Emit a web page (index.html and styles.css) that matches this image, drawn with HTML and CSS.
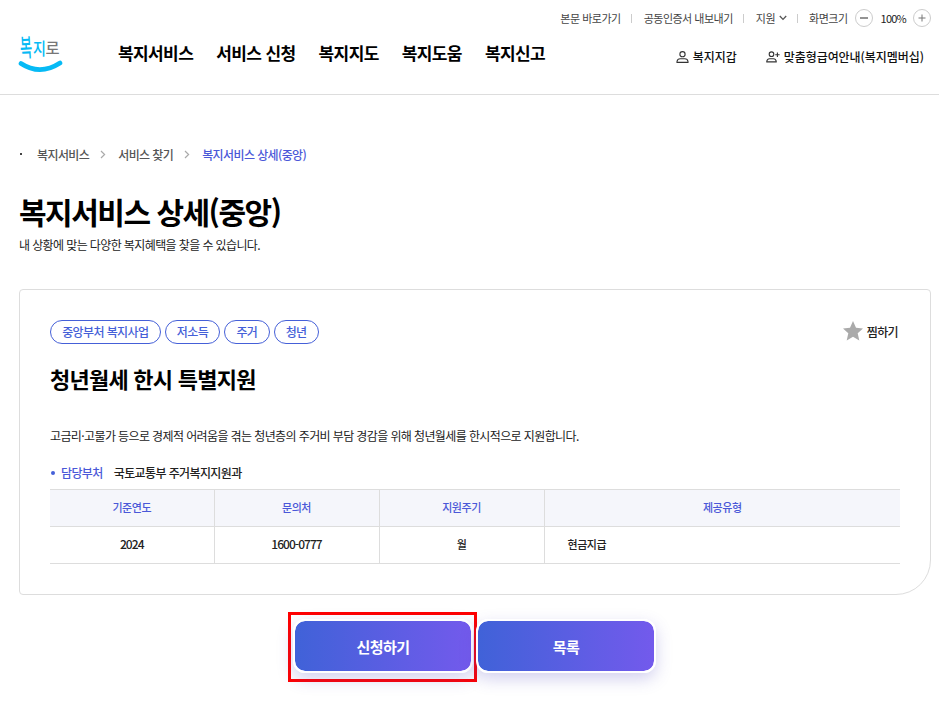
FILE: index.html
```
<!DOCTYPE html>
<html lang="ko">

<head>
    <meta charset="UTF-8">
    <meta name="viewport" content="width=device-width, initial-scale=1.0">
    <title>복지서비스 상세(중앙)</title>
    <link rel="stylesheet" href="styles.css">
</head>

<body>
    <header class="header">
        <a class="logo" href="#">
            <svg width="46" height="46" viewBox="0 -6 46 46">
                <g class="logo-text">
                    <text class="blue" transform="translate(2.500 23) rotate(-3) scale(.66 1.250)" font-size="20">복</text>
                    <text class="blue" transform="translate(15 20.500) scale(.78 .95)" font-size="18">지</text>
                    <text class="gray" transform="translate(27.500 20) scale(.9 .95)" font-size="17">로</text>
                </g>
                <path d="M3 29.5Q22 42 42 29" fill="none" stroke="#06baf5" stroke-width="4.600" stroke-linecap="round"/>
            </svg>
        </a>
        <nav class="gnb">
            <a href="#">복지서비스</a>
            <a href="#">서비스 신청</a>
            <a href="#">복지지도</a>
            <a href="#">복지도움</a>
            <a href="#">복지신고</a>
        </nav>
        <div class="right">
            <div class="util">
                <a href="#">본문 바로가기</a>
                <i class="bar"></i>
                <a href="#">공동인증서 내보내기</a>
                <i class="bar"></i>
                <a href="#">지원</a>
                <svg class="down" width="8" height="6" viewBox="0 0 8 6"><path d="M.8 1L4 4.4 7.2 1" fill="none" stroke="#555" stroke-width="1.3"/></svg>
                <i class="bar last"></i>
                <span>화면크기</span>
                <button class="zoom minus"><svg width="8" height="8" viewBox="0 0 8 8"><path d="M0 4h8" stroke="#666" stroke-width="1.4"/></svg></button>
                <span class="percent">100%</span>
                <button class="zoom"><svg width="8" height="8" viewBox="0 0 8 8"><path d="M.5 4h7M4 .5v7" stroke="#777" stroke-width="1"/></svg></button>
            </div>
            <div class="member">
                <a href="#">
                    <svg width="13" height="13" viewBox="0 0 13 13" fill="none" stroke="#333" stroke-width="1.1"><circle cx="6.5" cy="3.2" r="2.6"/><path d="M1 11.400V10.500Q1.500 7.700 4.200 7.700H8.800Q11.500 7.700 12 10.500V11.400Z"/></svg>
                    복지지갑
                </a>
                <a href="#">
                    <svg width="14" height="13" viewBox="0 0 14 13" fill="none" stroke="#333" stroke-width="1.1"><circle cx="5.500" cy="3.200" r="2.300"/><path d="M.8 10.900V10.200Q1.300 7.700 3.500 7.700H7.500Q9.700 7.700 10.200 10.200V10.900ZM9.200 3.700H13.600M11.400 1.500V5.900"/></svg>
                    맞춤형급여안내(복지멤버십)
                </a>
            </div>
        </div>
    </header>

    <main class="container">
        <div class="location">
            <i class="home"></i>
            <a href="#">복지서비스</a>
            <svg width="6" height="9" viewBox="0 0 6 9"><path d="M1 1l3.600 3.500L1 8" fill="none" stroke="#aaa" stroke-width="1.2"/></svg>
            <a href="#">서비스 찾기</a>
            <svg width="6" height="9" viewBox="0 0 6 9"><path d="M1 1l3.600 3.500L1 8" fill="none" stroke="#aaa" stroke-width="1.2"/></svg>
            <a class="on" href="#">복지서비스 상세(중앙)</a>
        </div>

        <h1>복지서비스 상세(중앙)</h1>
        <p class="sub">내 상황에 맞는 다양한 복지혜택을 찾을 수 있습니다.</p>

        <section class="card">
            <div class="card-top">
                <div class="tags">
                    <span>중앙부처 복지사업</span>
                    <span>저소득</span>
                    <span>주거</span>
                    <span>청년</span>
                </div>
                <button class="zzim">
                    <svg width="20" height="20" viewBox="0 0 20 20"><path d="M10 0l3 6.700 7 .7-5.300 4.800 1.600 7.300L10 15.700l-6.300 3.800 1.600-7.300L0 7.400l7-.7z" fill="#aaa"/></svg>
                    찜하기
                </button>
            </div>
            <h2>청년월세 한시 특별지원</h2>
            <p class="desc">고금리·고물가 등으로 경제적 어려움을 겪는 청년층의 주거비 부담 경감을 위해 청년월세를 한시적으로 지원합니다.</p>
            <div class="dept"><b>담당부처</b><span>국토교통부 주거복지지원과</span></div>
            <table>
                <tr>
                    <th class="first">기준연도</th>
                    <th>문의처</th>
                    <th>지원주기</th>
                    <th class="wide">제공유형</th>
                </tr>
                <tr>
                    <td class="num">2024</td>
                    <td class="num">1600-0777</td>
                    <td>월</td>
                    <td class="left">현금지급</td>
                </tr>
            </table>
        </section>

        <div class="btns">
            <div class="marked"><button class="btn">신청하기</button></div>
            <button class="btn">목록</button>
        </div>
    </main>
</body>

</html>
```
FILE: styles.css
```
* {
    box-sizing: border-box;
    margin: 0;
    padding: 0;
}

body {
    height: 707px;
    overflow: hidden;
    background: #fff;
    color: #222;
    font-family: "Noto Sans CJK KR", "Noto Sans", sans-serif;
    font-size: 12px;
    font-weight: 400;
    letter-spacing: -0.61px;
    white-space: nowrap;
}

a {
    color: inherit;
    text-decoration: none;
}

button {
    font: inherit;
    letter-spacing: inherit;
    color: inherit;
    background: none;
    border: 0;
}

svg {
    flex: none;
    display: block;
}

/* header */
.header {
    display: flex;
    height: 95px;
    border-bottom: 1px solid #ddd;
}

.logo {
    width: 46px;
    margin: 28px 54px 0 18px;
}

.logo-text {
    letter-spacing: 0;
    font-weight: 500;
}

.blue {
    fill: #06baf5;
}

.gray {
    fill: #777;
}

.gnb {
    display: flex;
    gap: 23px;
    padding-top: 40px;
    color: #000;
    font-size: 17px;
    font-weight: 700;
    line-height: 25px;
    letter-spacing: -0.6px;
}

.right {
    margin-left: auto;
}

.util {
    display: flex;
    align-items: center;
    justify-content: flex-end;
    height: 18px;
    margin-top: 9px;
    padding-right: 8px;
    font-size: 11px;
    color: #444;
    letter-spacing: -0.5px;
}

.bar {
    width: 1px;
    height: 9px;
    margin: 0 12px 0 10px;
    background: #ccc;
}

.last {
    margin: 0 11px 0 10px;
}

.down {
    margin-left: 4px;
}

.zoom {
    display: flex;
    align-items: center;
    justify-content: center;
    width: 18px;
    height: 18px;
    border: 1px solid #ccc;
    border-radius: 50%;
}

.minus {
    margin-left: 7px;
}

.percent {
    margin: 0 7px 0 8px;
    color: #222;
    letter-spacing: -0.75px;
}

.member {
    display: flex;
    justify-content: flex-end;
    gap: 29px;
    margin-top: 21px;
    padding-right: 15px;
    color: #111;
    font-weight: 500;
    line-height: 18px;
    letter-spacing: -0.05px;
}

.member a {
    display: flex;
    align-items: center;
    gap: 4px;
}

/* content */
.container {
    padding: 0 8px 0 19px;
}

.location {
    display: flex;
    align-items: center;
    height: 18px;
    margin-top: 50px;
    color: #555;
    font-weight: 500;
    letter-spacing: -0.6px;
}

.location .home {
    width: 2px;
    height: 2px;
    margin: 0 15px 1px 1px;
    background: #444;
}

.location svg {
    margin: 0 12px 0 11px;
}

.location .on {
    color: #4a58d8;
}

h1 {
    margin-top: 26px;
    color: #000;
    font-size: 30px;
    font-weight: 700;
    line-height: 44px;
    letter-spacing: -1.5px;
}

.sub {
    margin-top: 3px;
    line-height: 18px;
}

.card {
    height: 306px;
    margin-top: 35px;
    padding: 30px;
    border: 1px solid #ddd;
    border-radius: 4px 4px 35px 4px;
}

.card-top {
    display: flex;
    justify-content: space-between;
    height: 24px;
}

.tags {
    display: flex;
    gap: 4px;
    color: #4560d8;
    font-weight: 500;
}

.tags span {
    height: 24px;
    padding: 0 11.2px;
    border: 1px solid #4560d8;
    border-radius: 12px;
    line-height: 22px;
}

.zzim {
    display: flex;
    align-items: center;
    gap: 4px;
    height: 22px;
    padding-right: 2px;
    font-weight: 500;
}

h2 {
    margin-top: 18px;
    color: #000;
    font-size: 22px;
    font-weight: 700;
    line-height: 32px;
    letter-spacing: -0.75px;
}

.desc {
    margin-top: 33px;
    line-height: 18px;
}

.dept {
    display: flex;
    align-items: center;
    margin-top: 19px;
    font-weight: 500;
    line-height: 18px;
}

.dept::before {
    content: "";
    width: 4px;
    height: 4px;
    margin: 0 6px 0 1px;
    border-radius: 50%;
    background: #4560d8;
}

.dept b {
    margin-right: 11px;
    color: #4a58d8;
    font-weight: 500;
}

table {
    width: 850px;
    margin-top: 7px;
    border-collapse: collapse;
    table-layout: fixed;
    font-size: 11px;
    font-weight: 500;
    letter-spacing: -0.45px;
    text-align: center;
}

th,
td {
    height: 37px;
    padding-bottom: 2px;
    border: 1px solid #ddd;
    border-width: 1px 1px 1px 0;
}

th {
    width: 165px;
    background: #f5f6fb;
    color: #4a58d8;
    font-weight: 500;
}

th:last-child,
td:last-child {
    border-right: 0;
}

.first {
    width: 164px;
}

.wide {
    width: 356px;
}

.num {
    padding-bottom: 3px;
    font-size: 12px;
    letter-spacing: -0.95px;
}

.left {
    padding-left: 23px;
    text-align: left;
}

/* buttons */
.btns {
    display: flex;
    align-items: center;
    justify-content: center;
    margin-top: 17px;
    padding-right: 6px;
}

.btn {
    width: 180px;
    height: 54px;
    border: 2px solid #fff;
    border-radius: 12px;
    background: linear-gradient(90deg, #4062d8, #735aec) padding-box;
    box-shadow: 0 6px 16px rgba(80, 70, 190, 0.25);
    color: #fff;
    font-size: 15px;
    font-weight: 700;
}

.marked {
    height: 70px;
    padding: 4px 1px 0 2px;
    border: 3px solid #f00;
}

.marked + .btn {
    margin: 0 0 2px -1px;
}
```
